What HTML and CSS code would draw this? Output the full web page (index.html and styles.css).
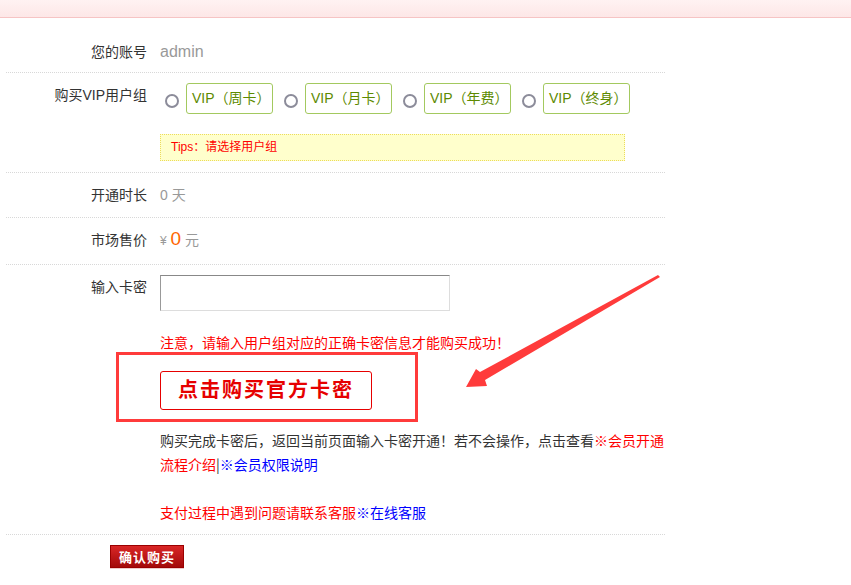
FILE: index.html
```html
<!DOCTYPE html>
<html lang="zh-CN">
<head>
  <meta charset="UTF-8">
  <title>购买VIP</title>
  <link rel="stylesheet" href="styles.css">
</head>
<body>

  <div class="topbar"></div>

  <div class="form">
    <div class="row first">
      <div class="label">您的账号</div>
      <div class="value user">admin</div>
    </div>

    <div class="row group-row">
      <div class="label">购买VIP用户组</div>
      <div class="value">
        <div class="groups">
          <label class="group"><span class="radio"></span><span class="tag">VIP（周卡）</span></label>
          <label class="group"><span class="radio"></span><span class="tag">VIP（月卡）</span></label>
          <label class="group"><span class="radio"></span><span class="tag">VIP（年费）</span></label>
          <label class="group"><span class="radio"></span><span class="tag">VIP（终身）</span></label>
        </div>
        <div class="tips">Tips：请选择用户组</div>
      </div>
    </div>

    <div class="row">
      <div class="label">开通时长</div>
      <div class="value muted">0 天</div>
    </div>

    <div class="row price-row">
      <div class="label">市场售价</div>
      <div class="value muted"><span class="yen">¥</span> <span class="price">0</span> 元</div>
    </div>

    <div class="row card-row">
      <div class="label">输入卡密</div>
      <div class="value">
        <input class="card-input" type="text">
        <p class="note">注意，请输入用户组对应的正确卡密信息才能购买成功！</p>
        <div class="buy-wrap">
          <a class="buy-card" href="#">点击购买官方卡密</a>
          <div class="mark"></div>
        </div>
        <p class="help">购买完成卡密后，返回当前页面输入卡密开通！若不会操作，点击查看<a class="red" href="#">※会员开通流程介绍</a>|<a class="blue" href="#">※会员权限说明</a><br><br><span class="red">支付过程中遇到问题请联系客服</span><a class="blue" href="#">※在线客服</a></p>
      </div>
    </div>
  </div>

  <div class="submit">
    <button class="btn-confirm">确认购买</button>
  </div>

  <svg class="arrow" width="851" height="585" viewBox="0 0 851 585">
    <polygon points="658,275 660,277 485,380 487,386 466,387 476,369 480,372" fill="#ff3b3b"/>
  </svg>

</body>
</html>
```

FILE: styles.css
```css
* { box-sizing: border-box; margin: 0; padding: 0; }
body {
  background: #fff;
  color: #333;
  font-family: "Liberation Sans", "Noto Sans CJK SC", sans-serif;
  font-size: 14px;
  position: relative;
  height: 585px;
  overflow: hidden;
}
a { text-decoration: none; }

.topbar {
  height: 18px;
  background: linear-gradient(#fff2f2, #fde7e7);
  border-bottom: 1px solid #f6c4c4;
}

.form { width: 659px; margin: 10px 0 0 6px; }
.row {
  display: flex;
  padding: 10px 0;
  border-bottom: 1px dotted #d8d8d8;
  line-height: 24px;
}
.row.first { padding: 12px 0 8px; }
.label {
  width: 154px; padding-right: 13px;
  text-align: right; color: #333; flex-shrink: 0;
}
.value { flex: 1; }
.user { color: #999; font-size: 16px; }
.muted { color: #999; }

.groups { display: flex; }
.group {
  display: flex; align-items: center; gap: 7px;
  padding-left: 5px; margin-right: 6px; cursor: pointer;
}
.radio {
  width: 14px; height: 14px; margin-top: 4px;
  border: 2px solid #8c8c9a; border-radius: 50%;
}
.tag {
  width: 87px; height: 31px; line-height: 29px;
  padding-left: 5px;
  border: 1px solid #a3c95f; border-radius: 3px;
  color: #5d8a00; white-space: nowrap;
}
.tips {
  width: 465px; height: 27px; line-height: 25px;
  margin-top: 20px; padding-left: 10px;
  background: #ffffcc; border: 1px dotted #ecdc5c;
  color: #f00; font-size: 12px;
}
.group-row { padding-bottom: 11px; }

.price-row { height: 47px; }
.yen { font-size: 12px; }
.price { color: #ff6600; font-size: 19px; line-height: 20px; }

.card-input {
  display: block;
  width: 290px; height: 36px;
  border: 1px solid #ddd; border-top-color: #888; border-left-color: #999;
  outline: none;
}
.note { color: #f00; margin-top: 20px; }
.buy-wrap { position: relative; margin-top: 16px; }
.buy-card {
  display: inline-block;
  width: 212px; height: 39px; line-height: 37px;
  border: 1px solid #e60000; border-radius: 3px;
  color: #e60000; font-size: 20px; font-weight: bold;
  text-align: center; letter-spacing: 2px;
}
.mark {
  position: absolute; left: -44px; top: -19px;
  width: 302px; height: 70px;
  border: 3px solid #ff3b3b;
}
.help {
  margin-top: 18px; margin-right: -8px;
  color: #333; font-family: "Noto Sans CJK SC", sans-serif;
}
.red { color: #f00; }
.blue { color: #00f; }

.submit { padding: 10px 0 0 110px; }
.btn-confirm {
  width: 74px; height: 23px;
  background: linear-gradient(#d92626, #a30a0a);
  border: 1px solid #9a0000;
  box-shadow: 0 1px 0 #efcaca;
  color: #fff; font-family: inherit; font-size: 13px; font-weight: bold;
  letter-spacing: 1px; cursor: pointer;
}

.arrow { position: absolute; left: 0; top: 0; pointer-events: none; }
```
